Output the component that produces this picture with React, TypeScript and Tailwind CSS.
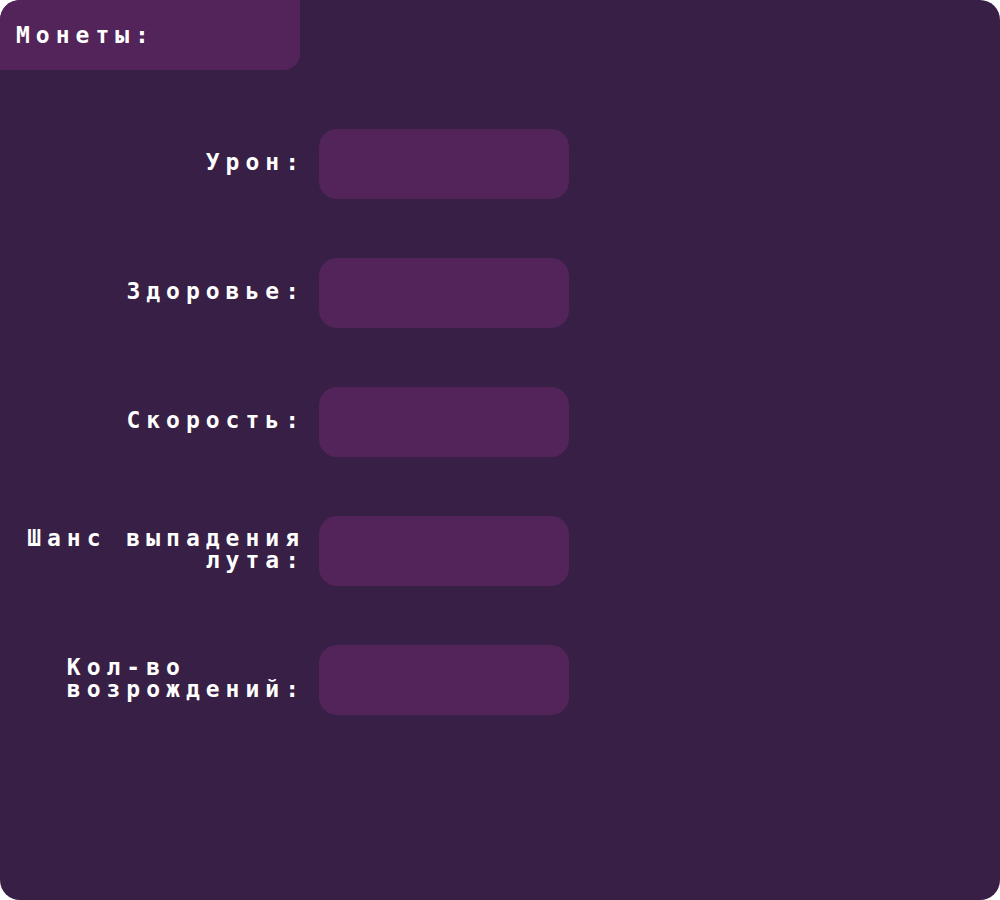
const font = { fontFamily: '"DejaVu Sans Mono", "Liberation Mono", monospace' };

const stats = [
  { id: 'damage', lines: ['Урон:'] },
  { id: 'health', lines: ['Здоровье:'] },
  { id: 'speed', lines: ['Скорость:'] },
  { id: 'loot', lines: ['Шанс выпадения', 'лута:'] },
  { id: 'respawn', lines: ['Кол-во', 'возрождений:'], left: true },
];

const StatRow = ({ lines, left }: { lines: string[]; left?: boolean }) => (
  <div className="flex items-center">
    <div className="w-[305px] text-right">
      <div
        className={`inline-block ${left ? 'text-left' : 'text-right'} text-[23px] leading-[22px] font-bold text-white tracking-[6px]`}
      >
        {lines.map((l) => (
          <div key={l}>{l}</div>
        ))}
      </div>
    </div>
    <div className="ml-[14px] w-[250px] h-[70px] rounded-[18px] bg-[#53245a]" />
  </div>
);

export default function App() {
  return (
    <div className="w-[1000px] h-[900px] bg-white" style={font}>
      <div className="w-full h-full rounded-[20px] bg-[#381f45] overflow-hidden flex flex-col">
        <div className="w-[300px] h-[70px] bg-[#53245a] rounded-br-[16px] flex items-center pl-[16px]">
          <span className="text-[23px] font-bold text-white tracking-[6px]">Монеты:</span>
        </div>
        <div className="mt-[59px] flex flex-col gap-[59px]">
          {stats.map((s) => (
            <StatRow key={s.id} lines={s.lines} left={s.left} />
          ))}
        </div>
      </div>
    </div>
  );
}
